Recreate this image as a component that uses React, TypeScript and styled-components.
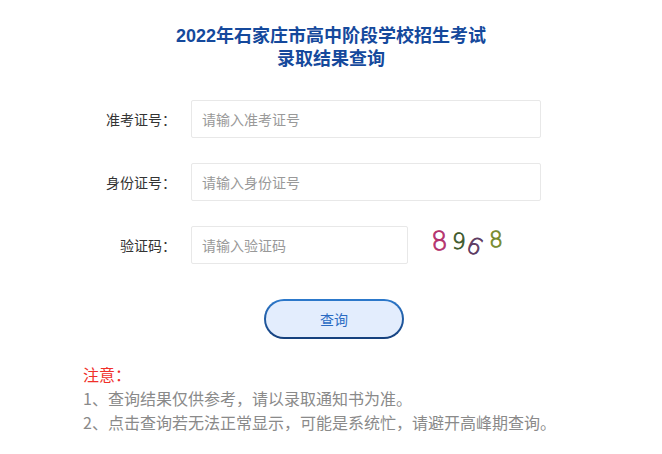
import React from 'react';
import styled, { createGlobalStyle } from 'styled-components';

const GlobalStyle = createGlobalStyle`
  body {
    margin: 0;
    background: #ffffff;
    font-family: "Noto Sans CJK SC", "Noto Sans", sans-serif;
  }
`;

const Page = styled.main`
  width: 496px;
  margin: 0 auto;
  padding-top: 25px;
  display: flex;
  flex-direction: column;
`;

const Title = styled.h1`
  margin: 0 0 29px;
  text-align: center;
  font-size: 18px;
  line-height: 23px;
  font-weight: 700;
  color: #15499c;
  font-family: "Liberation Sans", "Noto Sans CJK SC", sans-serif;
`;

const Form = styled.form`
  display: flex;
  flex-direction: column;
  gap: 25px;
`;

const Row = styled.div`
  display: flex;
  align-items: center;
  gap: 15px;
`;

const Label = styled.label`
  width: 93px;
  text-align: right;
  font-size: 14px;
  color: #333;
`;

const Input = styled.input<{ $w: number }>`
  box-sizing: border-box;
  width: ${p => p.$w}px;
  height: 38px;
  padding: 0 10px;
  border: 1px solid #e8e8e8;
  border-radius: 2px;
  font-size: 14px;
  font-family: "Noto Sans CJK SC", sans-serif;
  color: #333;
  outline: none;
  &::placeholder { color: #999; }
`;

const Captcha = styled.svg`
  margin-left: -11px;
  display: block;
`;

const Actions = styled.div`
  display: flex;
  justify-content: center;
  padding-left: 6px;
  margin: 35px 0 23px;
`;

const QueryButton = styled.button`
  width: 140px;
  height: 40px;
  border-radius: 20px;
  border: 2px solid transparent;
  background:
    linear-gradient(#e3edfd, #e3edfd) padding-box,
    linear-gradient(to bottom, #2c79cc, #153f7c) border-box;
  color: #2b6bc3;
  font-size: 14px;
  font-family: "Noto Sans CJK SC", sans-serif;
  cursor: pointer;
`;

const Notes = styled.div`
  font-size: 16px;
  line-height: 24px;
  color: #8a8a8a;
`;

const NoteLine = styled.p<{ $red?: boolean }>`
  margin: 0;
  color: ${p => (p.$red ? '#f0302a' : '#8a8a8a')};
  white-space: nowrap;
`;

// captcha digits: position, tilt and colour as drawn in the image
const digits = [
  { ch: '8', x: 19, y: 24, r: -4, s: 26, c: '#b3316c' },
  { ch: '9', x: 40, y: 23, r: 3, s: 22, c: '#3f5a2c' },
  { ch: '6', x: 56, y: 28, r: 28, s: 23, c: '#5c3a62' },
  { ch: '8', x: 77, y: 21, r: -2, s: 22, c: '#768a2c' },
];

const App: React.FC = () => {
  return (
    <>
      <GlobalStyle />
      <Page>
        <Title>
          2022年石家庄市高中阶段学校招生考试
          <br />
          录取结果查询
        </Title>
        <Form onSubmit={e => e.preventDefault()}>
          <Row>
            <Label>准考证号：</Label>
            <Input $w={350} placeholder="请输入准考证号" />
          </Row>
          <Row>
            <Label>身份证号：</Label>
            <Input $w={350} placeholder="请输入身份证号" />
          </Row>
          <Row>
            <Label>验证码：</Label>
            <Input $w={217} placeholder="请输入验证码" />
            <Captcha width="100" height="38" viewBox="0 0 100 38">
              {digits.map((d, i) => (
                <text
                  key={i}
                  x={d.x}
                  y={d.y}
                  fill={d.c}
                  stroke={d.c}
                  strokeWidth="0.8"
                  fontSize={d.s}
                  fontWeight="200"
                  fontFamily="DejaVu Sans, sans-serif"
                  transform={`rotate(${d.r} ${d.x + 7} ${d.y - 9})`}
                >
                  {d.ch}
                </text>
              ))}
            </Captcha>
          </Row>
        </Form>
        <Actions>
          <QueryButton type="button">查询</QueryButton>
        </Actions>
        <Notes>
          <NoteLine $red>注意：</NoteLine>
          <NoteLine>1、查询结果仅供参考，请以录取通知书为准。</NoteLine>
          <NoteLine>2、点击查询若无法正常显示，可能是系统忙，请避开高峰期查询。</NoteLine>
        </Notes>
      </Page>
    </>
  );
};

export default App;
